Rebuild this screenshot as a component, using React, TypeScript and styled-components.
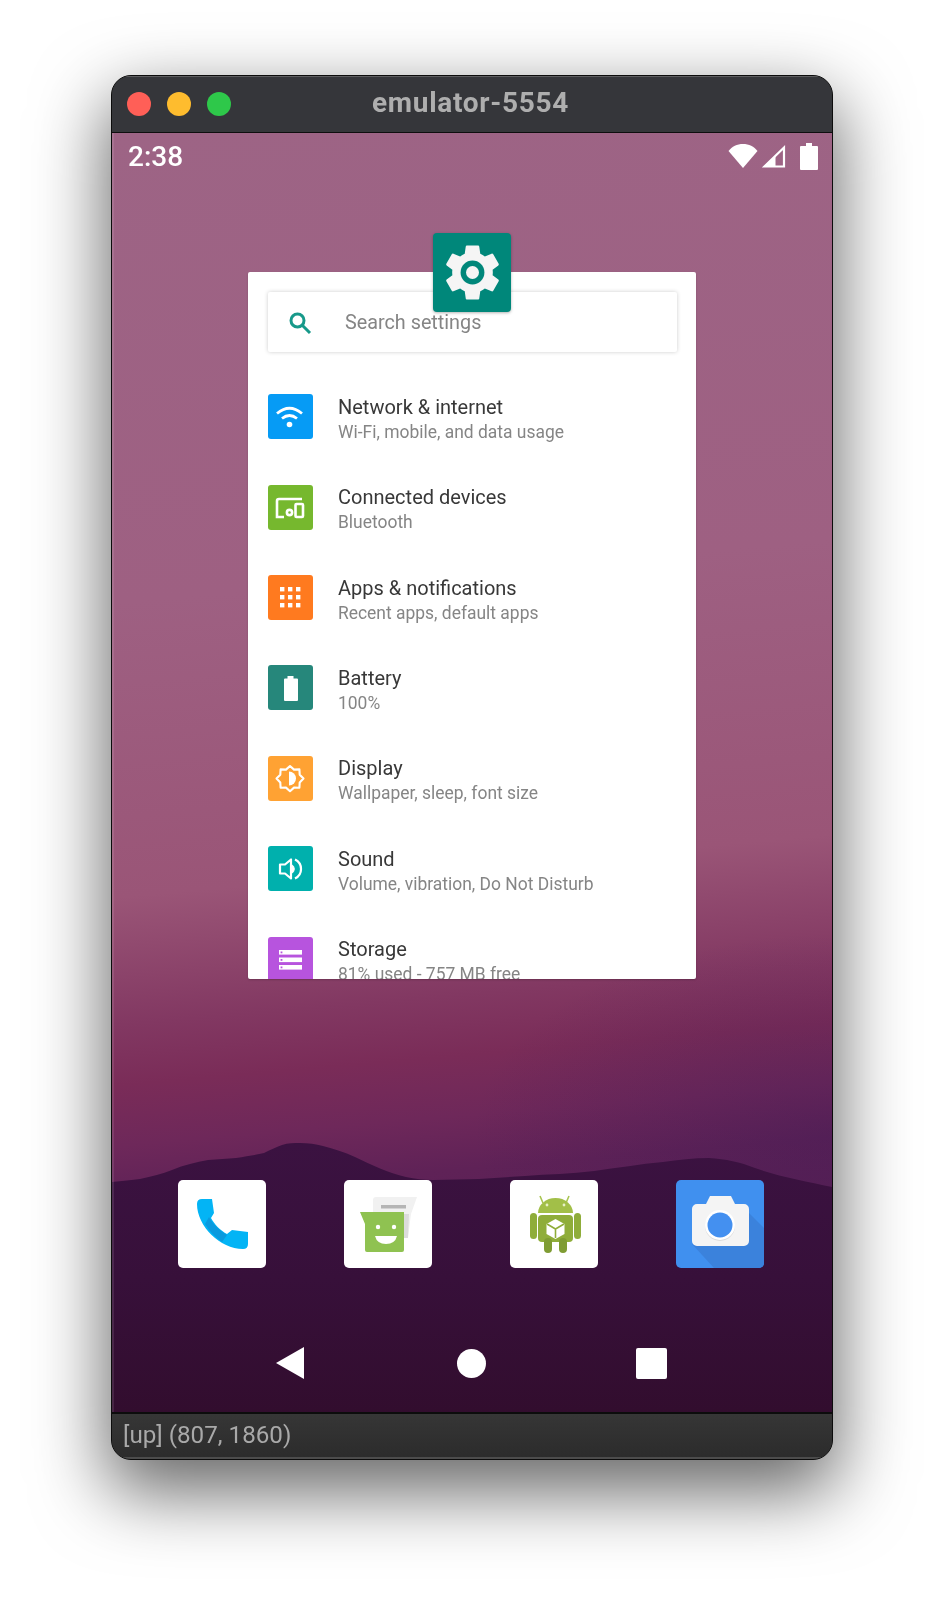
import React from "react";
import styled, { createGlobalStyle } from "styled-components";

const Global = createGlobalStyle`
  html, body { margin: 0; padding: 0; background: #fff; }
  * { box-sizing: border-box; }
`;

const Page = styled.div`
  width: 944px;
  height: 1608px;
  padding: 75px 0 0 111px;
  overflow: hidden;
  background: #fff;
  font-family: Roboto, "Liberation Sans", sans-serif;
`;

const Win = styled.div`
  width: 722px;
  height: 1385px;
  display: flex;
  flex-direction: column;
  border: 1px solid #0c0c0c;
  border-radius: 20px;
  overflow: hidden;
  box-shadow: 0 28px 72px 4px rgba(0, 0, 0, 0.6);
  background: #333;
`;

const TitleBar = styled.div`
  position: relative;
  height: 57px;
  flex: none;
  display: flex;
  align-items: center;
  gap: 16px;
  padding-left: 15px;
  background: #35363a;
  border-bottom: 1px solid #0e0e0e;
  box-shadow: inset 0 1px 0 #5e5e60;
`;

const Light = styled.span<{ $color: string }>`
  width: 24px;
  height: 24px;
  border-radius: 50%;
  background: ${(p) => p.$color};
`;

const WinTitle = styled.div`
  position: absolute;
  left: 0;
  right: 3px;
  top: 9px;
  text-align: center;
  font-size: 28px;
  line-height: 36px;
  font-weight: 700;
  letter-spacing: 0.7px;
  color: #aeaeae;
  filter: blur(0.4px);
`;

const Screen = styled.div`
  position: relative;
  height: 1279px;
  flex: none;
  display: flex;
  flex-direction: column;
  overflow: hidden;
  background:
    radial-gradient(ellipse 360px 200px at 100% 1000px, rgba(60, 25, 85, 0.35), transparent),
    linear-gradient(
      175deg,
      #9d6485 0%,
      #9e6082 35%,
      #9a5577 57%,
      #823862 66.5%,
      #7a2c58 71%,
      #6e285a 75.5%,
      #5f2257 79.5%,
      #4a1a4c 100%
    );
  &::after {
    content: "";
    position: absolute;
    left: 0;
    top: 0;
    bottom: 0;
    width: 2px;
    background: rgba(255, 255, 255, 0.1);
  }
`;

const Hills = styled.svg`
  position: absolute;
  left: 0;
  top: 960px;
  width: 720px;
  height: 319px;
`;

const Soft = styled.div`
  position: relative;
  display: flex;
  flex-direction: column;
  filter: blur(0.65px);
`;

const StatusBar = styled.div`
  height: 48px;
  display: flex;
  align-items: center;
  justify-content: space-between;
  padding: 0 14px 0 16px;
`;

const Clock = styled.div`
  font-size: 28px;
  font-weight: 500;
  color: #fff;
  line-height: 48px;
`;

const StatusIcons = styled.div`
  display: flex;
  align-items: center;
  gap: 3px;
  margin-top: -2px;
`;

const Card = styled.div`
  position: relative;
  width: 448px;
  height: 707px;
  margin: 91px 0 0 136px;
  background: #fff;
  border-radius: 2px;
  box-shadow: 0 1px 2px rgba(0, 0, 0, 0.2);
`;

const CardClip = styled.div`
  height: 100%;
  padding: 20px 19px 0 20px;
  overflow: hidden;
`;

const AppBadge = styled.div`
  position: absolute;
  left: 185px;
  top: -39px;
  width: 78px;
  height: 79px;
  display: flex;
  align-items: center;
  justify-content: center;
  background: #00877a;
  border-radius: 4px;
  box-shadow: 0 1px 3px rgba(0, 0, 0, 0.3);
`;

const SearchBox = styled.div`
  height: 60px;
  display: flex;
  align-items: center;
  gap: 33px;
  padding: 1px 0 0 20px;
  border-radius: 2px;
  box-shadow: 0 0 4px rgba(0, 0, 0, 0.2);
  font-size: 19.8px;
  color: #858585;
`;

const List = styled.div`
  padding-top: 19.6px;
`;

const Row = styled.div`
  height: 90.4px;
  display: flex;
  align-items: center;
  gap: 25px;
`;

const Tile = styled.div<{ $bg: string }>`
  width: 45px;
  height: 45px;
  flex: none;
  border-radius: 3px;
  background: ${(p) => p.$bg};
`;

const RowText = styled.div`
  margin-top: 6px;
`;

const RowTitle = styled.div`
  font-size: 20px;
  line-height: 25px;
  color: #383838;
`;

const RowSub = styled.div`
  font-size: 17.45px;
  line-height: 25px;
  color: #858585;
`;

const Dock = styled.div`
  display: flex;
  gap: 78px;
  margin: 201px 0 0 66px;
`;

const DockIcon = styled.div<{ $bg?: string }>`
  width: 88px;
  height: 88px;
  border-radius: 5px;
  overflow: hidden;
  background: ${(p) => p.$bg || "#fff"};
`;

const Nav = styled.div`
  display: grid;
  grid-template-columns: 181px 179px 31px;
  align-items: center;
  margin: 79px 0 0 164px;
`;

const Footer = styled.div`
  flex: 1;
  display: flex;
  align-items: center;
  padding: 0 0 4px 11px;
  background: linear-gradient(#363636, #2b2b2b);
  border-top: 2px solid #0c0c0c;
  box-shadow: inset 0 -2px 0 #4c4c4c;
  font-size: 24.2px;
  color: #a9a9a9;
  filter: blur(0.4px);
`;

const rows = [
  { t: "Network & internet", s: "Wi-Fi, mobile, and data usage", c: "#069bf5", i: "wifi" },
  { t: "Connected devices", s: "Bluetooth", c: "#76b82e", i: "devices" },
  { t: "Apps & notifications", s: "Recent apps, default apps", c: "#ff7a1f", i: "apps" },
  { t: "Battery", s: "100%", c: "#26877b", i: "battery" },
  { t: "Display", s: "Wallpaper, sleep, font size", c: "#ffa233", i: "display" },
  { t: "Sound", s: "Volume, vibration, Do Not Disturb", c: "#00b0ad", i: "sound" },
  { t: "Storage", s: "81% used - 757 MB free", c: "#b754de", i: "storage" },
];

function RowGlyph({ name }: { name: string }) {
  const common = { width: 45, height: 45, viewBox: "0 0 45 45", fill: "none" };
  switch (name) {
    case "wifi":
      return (
        <svg {...common} stroke="#fff" strokeWidth="2.8">
          <path d="M9 19.500Q21.500 9 34 19.500" />
          <path d="M14 24.500Q21.500 18.500 29 24.500" />
          <circle cx="21.500" cy="30.500" r="2.800" fill="#fff" stroke="none" />
        </svg>
      );
    case "devices":
      return (
        <svg {...common} stroke="#fff" strokeWidth="2.600">
          <path d="M34 14H11a2 2 0 0 0-2 2v16h7" />
          <circle cx="21.500" cy="27.500" r="2.600" />
          <rect x="27.500" y="19" width="7.500" height="13" rx="1" />
        </svg>
      );
    case "apps":
      return (
        <svg {...common} fill="#fff">
          {[12, 20, 28].map((y) =>
            [12, 20, 28].map((x) => <rect key={`${x}-${y}`} x={x} y={y} width="4.400" height="4.400" />)
          )}
        </svg>
      );
    case "battery":
      return (
        <svg {...common} fill="#fff">
          <path d="M19.500 11h6v2.500h3.500a1 1 0 0 1 1 1V35a1 1 0 0 1-1 1H17a1 1 0 0 1-1-1V14.500a1 1 0 0 1 1-1h2.500z" />
        </svg>
      );
    case "display":
      return (
        <svg {...common}>
          <path
            d="M22 10l4 3.600 5.400-.2.300 5.300 3.800 3.900-3.800 3.900-.3 5.300-5.400-.2-4 3.600-4-3.600-5.400.2-.3-5.300-3.800-3.900 3.800-3.900.3-5.300 5.400.2z"
            stroke="#fff"
            strokeWidth="2.100"
            strokeLinejoin="round"
          />
          <path d="M21 15.500a7 7 0 0 1 0 14z" fill="#fff" />
        </svg>
      );
    case "sound":
      return (
        <svg {...common} stroke="#fff" strokeWidth="2.200">
          <path d="M12 18.500h5l6-5v19l-6-5h-5z" strokeLinejoin="round" />
          <path d="M23.500 18.500a5 5 0 0 1 0 9" fill="#fff" strokeWidth="1" />
          <path d="M27 13.500a10.500 10.500 0 0 1 0 19" />
        </svg>
      );
    default:
      return (
        <svg {...common}>
          {[13, 20.500, 28].map((y) => (
            <g key={y}>
              <rect x="11" y={y} width="23" height="4.600" fill="#fff" />
              <rect x="12.600" y={y + 1.500} width="1.800" height="1.800" fill="#b754de" />
            </g>
          ))}
        </svg>
      );
  }
}

const gearPath =
  "M19.43 12.98c.04-.32.07-.64.07-.98s-.03-.66-.07-.98l2.11-1.65c.19-.15.24-.42.12-.64l-2-3.46c-.12-.22-.39-.3-.61-.22l-2.49 1c-.52-.4-1.08-.73-1.69-.98l-.38-2.65C14.46 2.18 14.25 2 14 2h-4c-.25 0-.46.18-.49.42l-.38 2.65c-.61.25-1.17.59-1.69.98l-2.49-1c-.23-.09-.49 0-.61.22l-2 3.46c-.13.22-.07.49.12.64l2.11 1.65c-.04.32-.07.65-.07.98s.03.66.07.98l-2.11 1.65c-.19.15-.24.42-.12.64l2 3.46c.12.22.39.3.61.22l2.49-1c.52.4 1.08.73 1.69.98l.38 2.65c.03.24.24.42.49.42h4c.25 0 .46-.18.49-.42l.38-2.65c.61-.25 1.17-.59 1.69-.98l2.49 1c.23.09.49 0 .61-.22l2-3.46c.12-.22.07-.49-.12-.64l-2.11-1.65z";

export default function App() {
  return (
    <Page>
      <Global />
      <Win>
        <TitleBar>
          <Light $color="#ff5f57" />
          <Light $color="#febc2e" />
          <Light $color="#2ec84a" />
          <WinTitle>emulator-5554</WinTitle>
        </TitleBar>
        <Screen>
          <Hills viewBox="0 0 720 319">
            <defs>
              <linearGradient id="hillShade" x1="0" y1="0" x2="0" y2="1">
                <stop offset="0" stopColor="#3b1241" />
                <stop offset="0.5" stopColor="#37103a" />
                <stop offset="1" stopColor="#320d2e" />
              </linearGradient>
            </defs>
            <path
              d="M0 89C10 88 20 87 28 86C40 83 50 81 60 77C72 72 84 69 96 67C106 66 115 66 124 65C135 63 144 62 152 60C158 57 164 54 170 52C176 50 182 50 188 50C196 50 204 51 211 53C222 56 232 59 243 64C260 72 276 80 294 84C303 86 312 87 321 87C336 87 352 86 367 86C382 85 398 84 413 83C436 81 459 81 482 78C505 75 528 71 551 69C566 67 582 65 597 65C614 66 628 69 643 75C668 84 694 88 720 94V319H0Z"
              fill="url(#hillShade)"
            />
          </Hills>
          <Soft>
            <StatusBar>
              <Clock>2:38</Clock>
              <StatusIcons>
                <svg width="30" height="26" viewBox="0 0 30 26">
                  <path d="M15 25L0.500 8C4 3.500 9 1 15 1s11 2.500 14.500 7z" fill="#fff" />
                </svg>
                <svg width="25" height="24" viewBox="0 0 25 24" fill="none">
                  <path d="M23 3.500V22.500H3.500z" stroke="#fff" strokeWidth="2.200" />
                  <path d="M14.500 12.500V22.500H4z" fill="#fff" />
                </svg>
                <svg width="18" height="27" viewBox="0 0 18 27" style={{ marginLeft: 11 }}>
                  <path d="M6 0h6v3h5a1 1 0 0 1 1 1v22a1 1 0 0 1-1 1H1a1 1 0 0 1-1-1V4a1 1 0 0 1 1-1h5z" fill="#fff" />
                </svg>
              </StatusIcons>
            </StatusBar>
            <Card>
              <CardClip>
                <SearchBox>
                  <svg width="24" height="24" viewBox="0 0 24 24" fill="none" stroke="#17998a" strokeWidth="3">
                    <circle cx="9.500" cy="9.500" r="6.500" />
                    <path d="M14.500 14.500L22 22" />
                  </svg>
                  <span>Search settings</span>
                </SearchBox>
                <List>
                  {rows.map((r) => (
                    <Row key={r.t}>
                      <Tile $bg={r.c}>
                        <RowGlyph name={r.i} />
                      </Tile>
                      <RowText>
                        <RowTitle>{r.t}</RowTitle>
                        <RowSub>{r.s}</RowSub>
                      </RowText>
                    </Row>
                  ))}
                </List>
              </CardClip>
              <AppBadge>
                <svg width="65" height="65" viewBox="0 0 24 24">
                  <path d={gearPath} fill="#f5f5f5" />
                  <circle cx="12" cy="12" r="4.400" fill="#00877a" />
                  <circle cx="12" cy="12" r="2.400" fill="#f5f5f5" />
                </svg>
              </AppBadge>
            </Card>
            <Dock>
              <DockIcon>
                <svg width="88" height="88" viewBox="0 0 88 88">
                  <path d="M19 24q0-5 5-5h10l2 14-3 5c3 6 10 13 16 16l5-4 16 2v12q0 5-5 5C42 69 19 46 19 24z" fill="#03b4f5" />
                  <path d="M31 37c3 6 10 13 18 18l-5 7c-7-5-13-11-17-18z" fill="#0a9ade" />
                </svg>
              </DockIcon>
              <DockIcon>
                <svg width="88" height="88" viewBox="0 0 88 88">
                  <path d="M29 20q0-3 3-3h41l-6 17-3 24H29z" fill="#f1f1f1" />
                  <path d="M60 34l5 0-1 24h-4z" fill="#dcdcdc" />
                  <rect x="37" y="25" width="25" height="3.500" fill="#b5b5b5" />
                  <path d="M16 32h44v38a2 2 0 0 1-2 2H23a2 2 0 0 1-2-2V44z" fill="#8fc251" />
                  <circle cx="34" cy="47" r="2.200" fill="#fff" />
                  <circle cx="50" cy="47" r="2.200" fill="#fff" />
                  <path d="M31 56h22q-2 8-11 8t-11-8z" fill="#fff" />
                </svg>
              </DockIcon>
              <DockIcon>
                <svg width="88" height="88" viewBox="0 0 88 88">
                  <path d="M33 23l-3-7M56 23l3-7" stroke="#a9c552" strokeWidth="1.600" />
                  <path d="M28 33a17.500 15 0 0 1 35 0z" fill="#a2bf48" />
                  <circle cx="37" cy="25" r="1.400" fill="#e8f0c8" />
                  <circle cx="54" cy="25" r="1.400" fill="#e8f0c8" />
                  <rect x="28" y="35" width="35" height="27" rx="4" fill="#8fad3a" />
                  <rect x="20" y="33" width="7" height="26" rx="3.500" fill="#8fad3a" />
                  <rect x="64" y="33" width="7" height="26" rx="3.500" fill="#8fad3a" />
                  <rect x="34" y="58" width="8" height="15" rx="4" fill="#7f9c33" />
                  <rect x="49" y="58" width="8" height="15" rx="4" fill="#7f9c33" />
                  <path d="M45.500 39l9 5v10l-9 5-9-5V44z" fill="#fff" />
                  <path d="M37 44l8.500 5 8.500-5M45.500 49v9" stroke="#8fad3a" strokeWidth="1.600" fill="none" />
                </svg>
              </DockIcon>
              <DockIcon $bg="#4090ef">
                <svg width="88" height="88" viewBox="0 0 88 88">
                  <path d="M70 30L88 48V88H38L16 64z" fill="#3b82dc" />
                  <path d="M21 24h9l4-8h21l4 8h9a5 5 0 0 1 5 5v32a5 5 0 0 1-5 5H21a5 5 0 0 1-5-5V29a5 5 0 0 1 5-5z" fill="#f4f4f4" />
                  <circle cx="44" cy="46" r="15" fill="#dcdcdc" />
                  <circle cx="44" cy="45" r="15" fill="#fff" />
                  <circle cx="44" cy="45" r="12.500" fill="#4490f0" />
                </svg>
              </DockIcon>
            </Dock>
            <Nav>
              <svg width="28" height="32" viewBox="0 0 28 32">
                <path d="M28 0V32L0 16z" fill="#fff" />
              </svg>
              <svg width="29" height="29" viewBox="0 0 29 29">
                <circle cx="14.500" cy="14.500" r="14.500" fill="#fff" />
              </svg>
              <svg width="31" height="31" viewBox="0 0 31 31">
                <rect width="31" height="31" rx="2" fill="#fff" />
              </svg>
            </Nav>
          </Soft>
        </Screen>
        <Footer>[up] (807, 1860)</Footer>
      </Win>
    </Page>
  );
}
